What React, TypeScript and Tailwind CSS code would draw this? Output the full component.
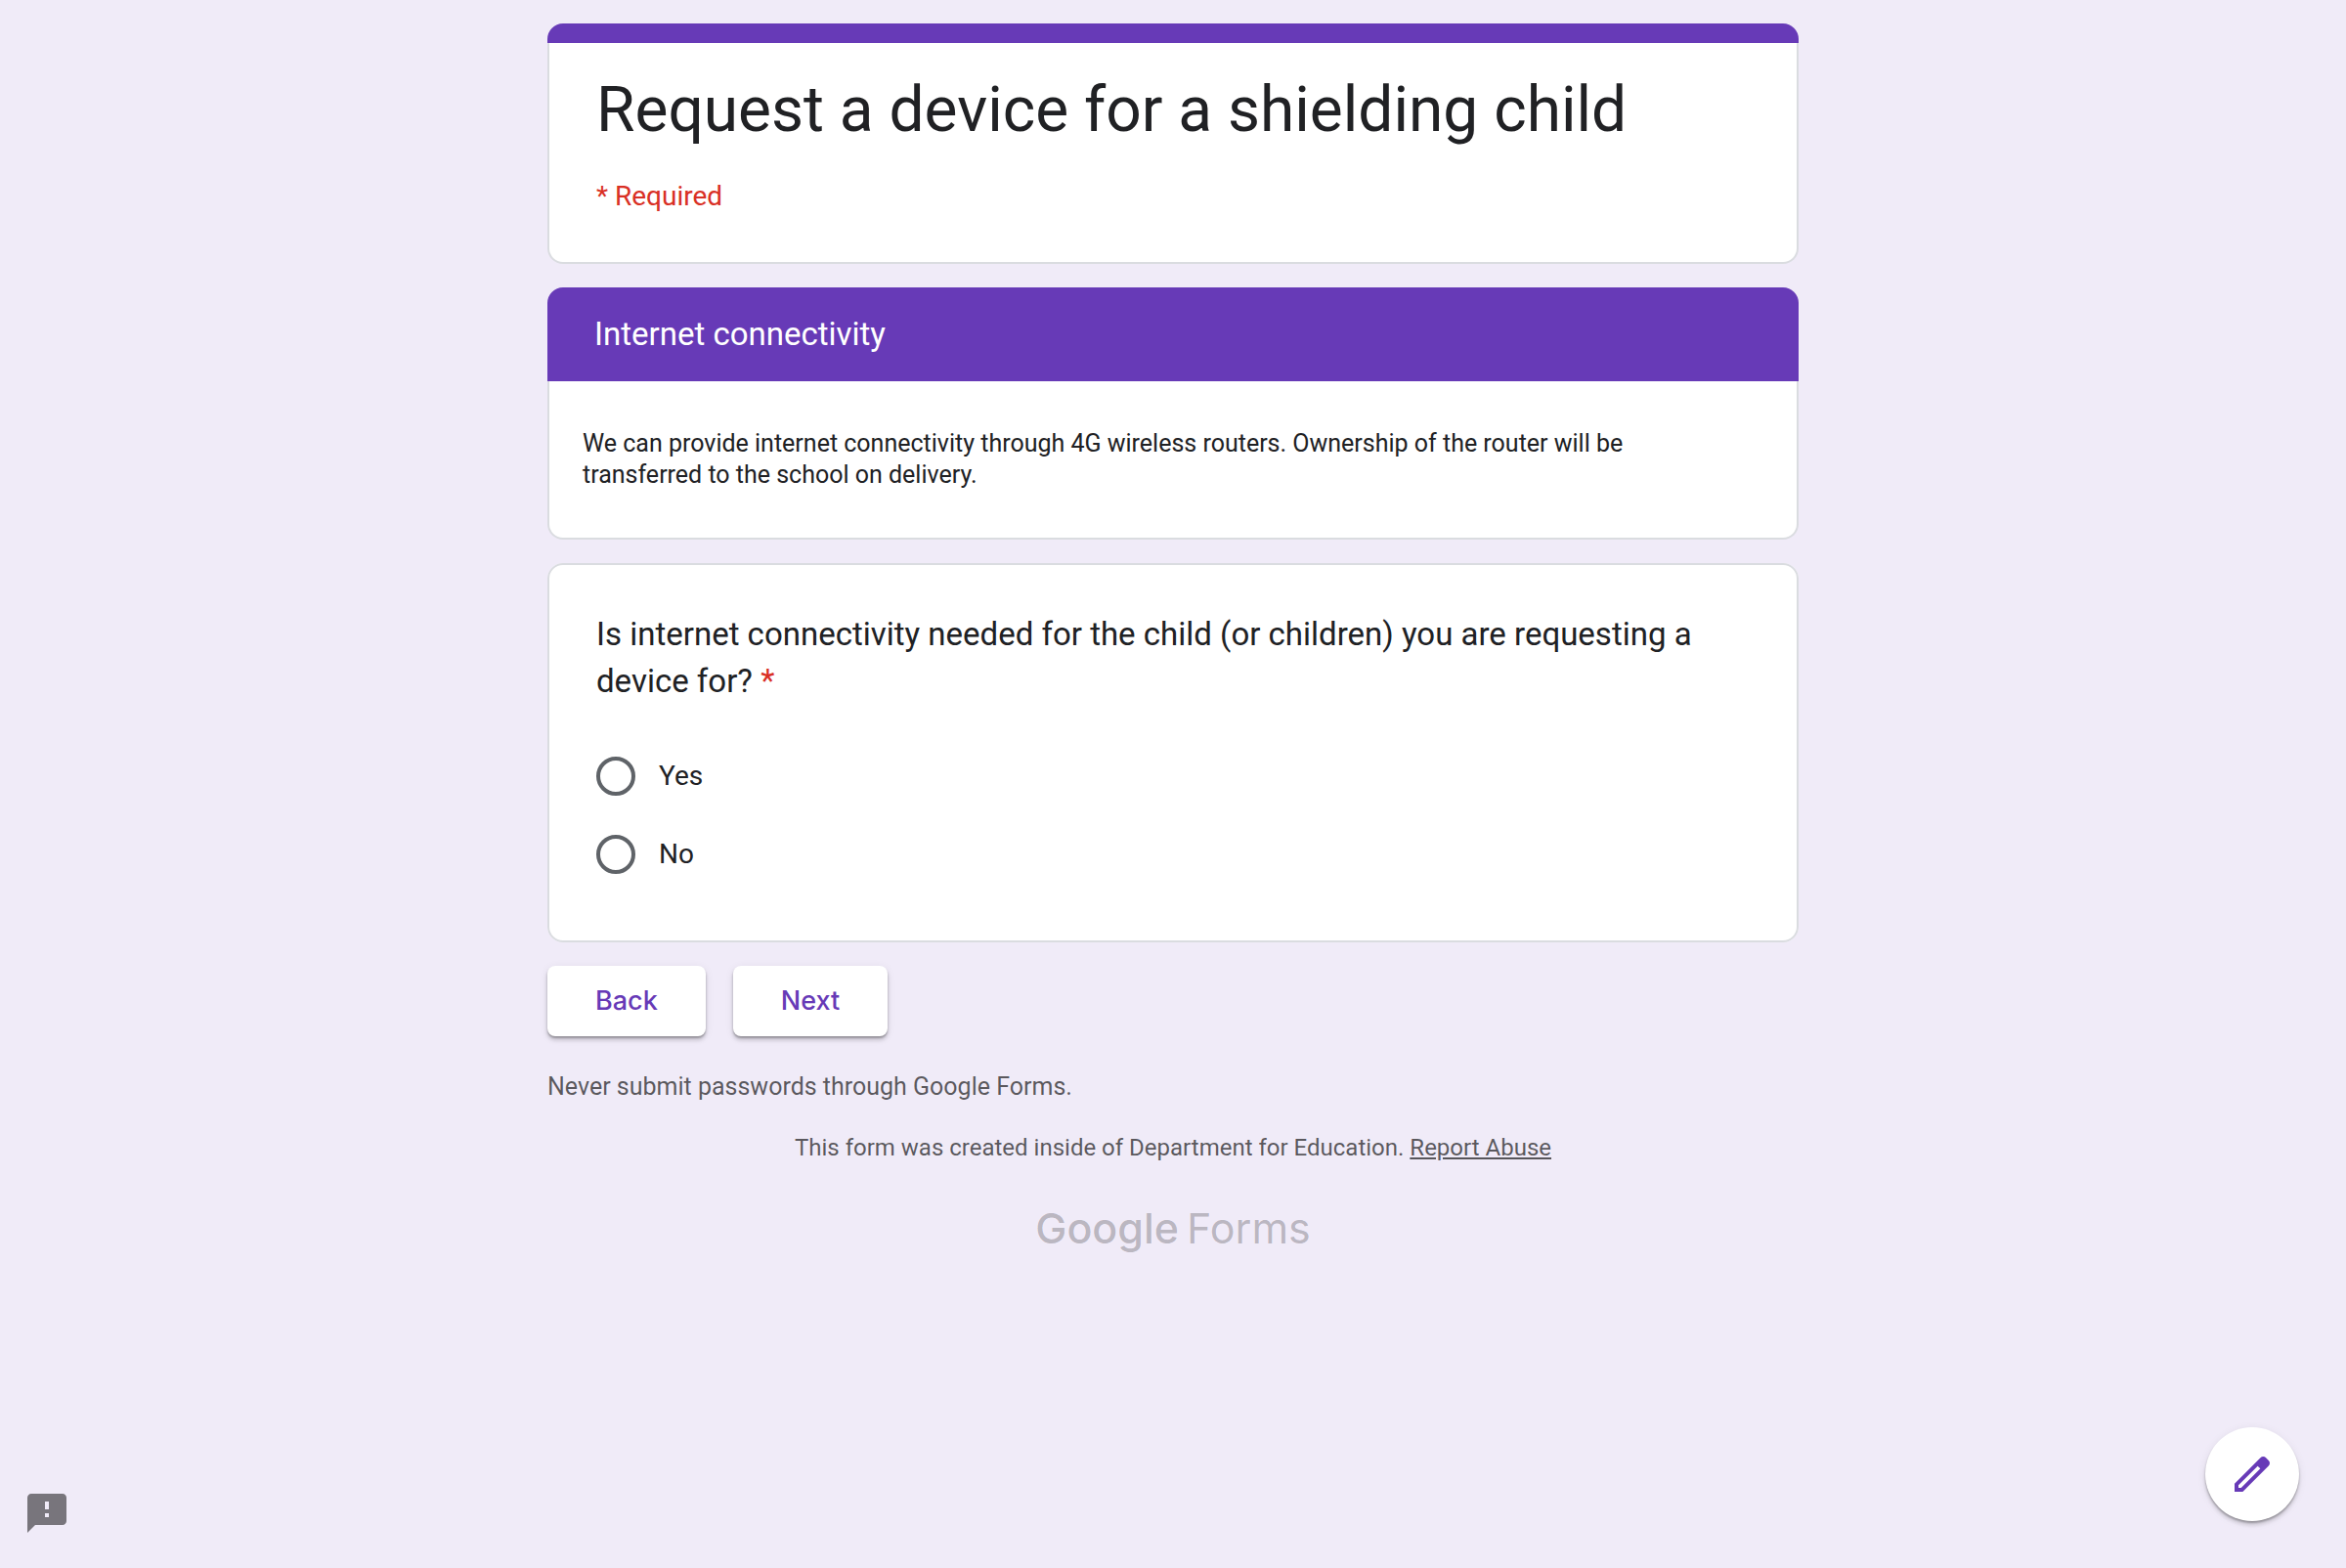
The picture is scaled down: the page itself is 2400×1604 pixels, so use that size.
import { useState } from "react";

const options = ["Yes", "No"];

function FormHeader() {
  return (
    <header>
      <div className="h-5 rounded-t-2xl bg-[#673ab7]" />
      <div className="rounded-b-2xl border-x-2 border-b-2 border-[#dadce0] bg-white px-12 pt-[29px] pb-[47px]">
        <h1 className="text-[64px] leading-[80px]">Request a device for a shielding child</h1>
        <p className="mt-7 text-[28px] leading-10 text-[#d93025]">* Required</p>
      </div>
    </header>
  );
}

function SectionIntro() {
  return (
    <section>
      <h2 className="rounded-t-2xl bg-[#673ab7] px-12 py-6 text-[33px] leading-[48px] text-white">
        Internet connectivity
      </h2>
      <div className="rounded-b-2xl border-x-2 border-b-2 border-[#dadce0] bg-white py-12 pr-24 pl-[34px]">
        <p className="text-[25px] leading-8">
          We can provide internet connectivity through 4G wireless routers. Ownership of the router will be
          transferred to the school on delivery.
        </p>
      </div>
    </section>
  );
}

function Question() {
  const [answer, setAnswer] = useState("");
  return (
    <fieldset className="rounded-2xl border-2 border-[#dadce0] bg-white px-12 pt-[47px] pb-[68px]">
      <legend className="float-left w-full text-[33px] leading-[48px]">
        Is internet connectivity needed for the child (or children) you are requesting a device for?{" "}
        <span className="text-[#d93025]">*</span>
      </legend>
      <div className="clear-both flex flex-col items-start gap-10 pt-[53px]">
        {options.map((option) => (
          <label key={option} className="flex cursor-pointer items-center gap-6 text-[28px] leading-10">
            <input
              type="radio"
              name="connectivity"
              value={option}
              checked={answer === option}
              onChange={() => setAnswer(option)}
              className="size-10 appearance-none rounded-full border-4 border-[#5f6368] checked:border-[12px] checked:border-[#673ab7]"
            />
            {option}
          </label>
        ))}
      </div>
    </fieldset>
  );
}

function NavButton({ label }: { label: string }) {
  return (
    <button
      type="button"
      className="h-[72px] cursor-pointer rounded-lg bg-white px-[49px] font-[Inter,sans-serif] text-[27px] font-medium text-[#673ab7] shadow-[0_4px_4px_rgba(0,0,0,0.14),0_2px_2px_rgba(0,0,0,0.24),0_2px_10px_rgba(0,0,0,0.08)]"
    >
      {label}
    </button>
  );
}

export default function App() {
  return (
    <div className="min-h-screen bg-[#f0ebf8] px-6 pt-6 pb-12 font-[Roboto,sans-serif] text-[#202124]">
      <main className="mx-auto max-w-[1280px]">
        <form className="flex flex-col gap-6" onSubmit={(e) => e.preventDefault()}>
          <FormHeader />
          <SectionIntro />
          <Question />
          <div className="flex gap-7">
            <NavButton label="Back" />
            <NavButton label="Next" />
          </div>
        </form>
        <footer className="text-black/64">
          <p className="mt-9 text-[25px] leading-8">Never submit passwords through Google Forms.</p>
          <p className="mt-[30px] text-center text-2xl leading-8">
            This form was created inside of Department for Education.{" "}
            <a href="#report" className="underline">
              Report Abuse
            </a>
          </p>
          <a
            href="#forms"
            className="mx-auto mt-[42px] flex w-fit items-baseline gap-2 font-[Inter,sans-serif] text-[43px] leading-[48px] text-black/24"
          >
            <span className="font-medium">Google</span>
            <span>Forms</span>
          </a>
        </footer>
      </main>

      <button type="button" aria-label="Report a problem" className="fixed bottom-8 left-6 cursor-pointer">
        <svg viewBox="0 0 24 24" className="size-12 fill-black/50" aria-hidden="true">
          <path d="M20 2H4c-1.100 0-1.990.9-1.990 2L2 22l4-4h14c1.100 0 2-.9 2-2V4c0-1.100-.9-2-2-2zm-7 12h-2v-2h2v2zm0-4h-2V6h2v4z" />
        </svg>
      </button>

      <button
        type="button"
        aria-label="Edit this form"
        className="fixed right-12 bottom-12 flex size-24 cursor-pointer items-center justify-center rounded-full bg-white shadow-[0_4px_4px_rgba(0,0,0,0.14),0_2px_2px_rgba(0,0,0,0.24),0_2px_10px_rgba(0,0,0,0.08)]"
      >
        <svg viewBox="0 0 24 24" className="size-12 fill-[#673ab7]" aria-hidden="true">
          <path d="M20.410 4.940l-1.350-1.350c-.78-.78-2.050-.78-2.830 0L3 16.820V21h4.180L20.410 7.770c.79-.78.79-2.050 0-2.830zM6.350 19H5v-1.350l9.820-9.820 1.350 1.350L6.350 19z" />
        </svg>
      </button>
    </div>
  );
}
